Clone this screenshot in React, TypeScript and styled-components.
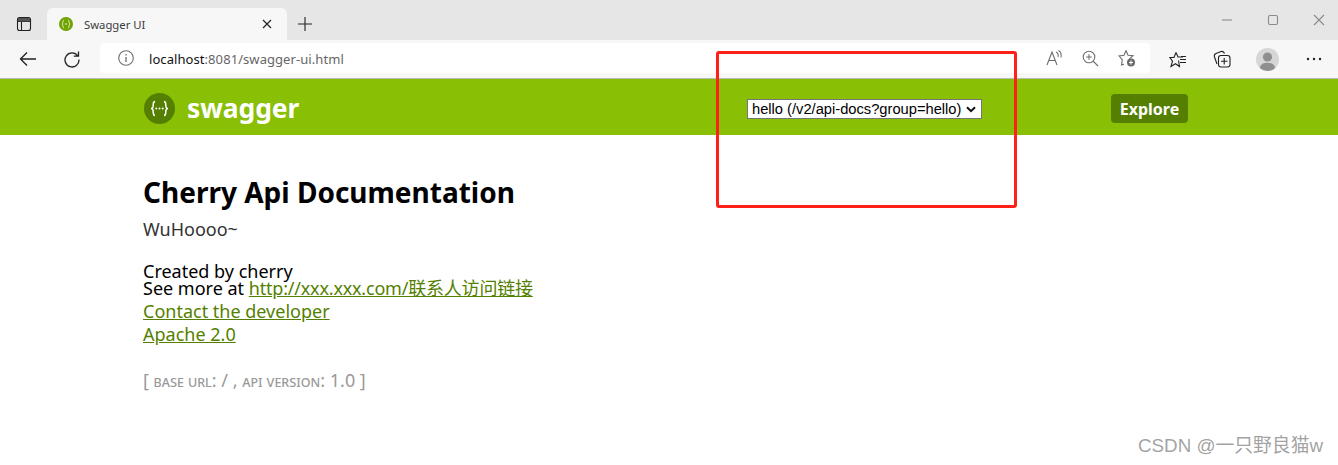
import React from "react";
import styled, { createGlobalStyle } from "styled-components";

const UI_FONT = `"Noto Sans", "Noto Sans CJK SC", sans-serif`;

const CHEVRON = encodeURIComponent(
  `<svg xmlns="http://www.w3.org/2000/svg" width="10" height="7" viewBox="0 0 10 7"><path d="M1 1.200L5 5.200L9 1.200" fill="none" stroke="#111" stroke-width="2"/></svg>`
);

const Global = createGlobalStyle`
  html, body { margin: 0; padding: 0; background: #fff; }
  body { width: 1338px; height: 465px; overflow: hidden; font-family: ${UI_FONT}; position: relative; }
`;

const Page = styled.div`
  width: 1338px;
  height: 465px;
  position: relative;
  overflow: hidden;
  display: flex;
  flex-direction: column;
`;

const TabStrip = styled.div`
  height: 40px;
  flex: none;
  background: #e6e6e6;
  display: flex;
  align-items: flex-end;
  box-sizing: border-box;
`;

const TabActions = styled.div`
  width: 47px;
  height: 32px;
  display: flex;
  align-items: center;
  justify-content: center;
  flex: none;
`;

const Tab = styled.div`
  width: 240px;
  height: 32px;
  flex: none;
  background: #f7f7f7;
  border-radius: 6px 6px 0 0;
  display: flex;
  align-items: center;
  box-sizing: border-box;
  padding: 0 15px 0 12px;
`;

const TabTitle = styled.span`
  font-size: 11.3px;
  color: #3c3c3c;
  margin-left: 11px;
  flex: 1;
`;

const NewTab = styled.div`
  width: 36px;
  height: 32px;
  display: flex;
  align-items: center;
  justify-content: center;
  flex: none;
`;

const Spacer = styled.div`
  flex: 1;
`;

const WindowControls = styled.div`
  display: flex;
  align-items: center;
  height: 40px;
  padding-right: 7px;
  gap: 21px;
`;

const WindowButton = styled.div`
  width: 25px;
  height: 40px;
  display: flex;
  align-items: center;
  justify-content: center;
`;

const Toolbar = styled.div`
  height: 39px;
  flex: none;
  background: #f7f7f7;
  border-bottom: 1px solid #b9b9b9;
  box-sizing: border-box;
  display: flex;
  align-items: center;
`;

const NavButton = styled.div`
  width: 44px;
  height: 38px;
  display: flex;
  align-items: center;
  justify-content: center;
  flex: none;
`;

const NavGroup = styled.div`
  display: flex;
  padding-left: 6px;
  width: 100px;
  box-sizing: border-box;
  flex: none;
`;

const AddressBar = styled.div`
  width: 1050px;
  height: 30px;
  margin-top: -3px;
  background: #fff;
  border-radius: 4px;
  display: flex;
  align-items: center;
  box-sizing: border-box;
  padding: 0 14px 0 18px;
  flex: none;
`;

const Url = styled.span`
  font-size: 13px;
  margin-left: 15px;
  padding-top: 2px;
  color: #666;
  flex: 1;
  letter-spacing: 0.07px;
`;

const Host = styled.span`
  color: #111;
`;

const AddressIcons = styled.div`
  display: flex;
  gap: 19px;
  align-items: center;
  padding-top: 1px;
`;

const ToolIcons = styled.div`
  display: flex;
  align-items: center;
  padding-left: 16px;
  gap: 21px;
`;

const Avatar = styled.div`
  width: 23px;
  height: 23px;
  display: flex;
  margin-left: 4px;
`;

const SwaggerBar = styled.header`
  height: 56px;
  flex: none;
  background: #89bf04;
  display: flex;
  align-items: center;
  box-sizing: border-box;
  padding: 3px 150px 0 143px;
`;

const Logo = styled.div`
  display: flex;
  align-items: center;
  gap: 11px;
  width: 604px;
  flex: none;
`;

const LogoText = styled.span`
  color: #fff;
  font-size: 26.5px;
  font-weight: 700;
  letter-spacing: -0.1px;
  line-height: 30px;
  padding-bottom: 2px;
`;

const GroupSelect = styled.select`
  width: 235px;
  height: 20px;
  margin: 0;
  font: 14.7px "Liberation Sans", Arial, sans-serif;
  color: #000;
  appearance: none;
  background: #fff url("data:image/svg+xml,${CHEVRON}") no-repeat 218px 6px;
  border: 1px solid #767676;
  border-radius: 0;
  padding: 0 0 0 4px;
`;

const Explore = styled.button`
  margin-left: auto;
  width: 77px;
  height: 29px;
  border: 0;
  border-radius: 4px;
  background: #547f00;
  color: #fff;
  font: 700 16px ${UI_FONT};
  padding: 0;
`;

const Content = styled.main`
  padding: 37px 0 0 143px;
  flex: 1;
  color: #000;
  font-size: 18px;
`;

const Title = styled.h1`
  margin: 0;
  font-size: 28px;
  font-weight: 700;
  line-height: 40px;
  color: #000;
`;

const Description = styled.p`
  margin: 6px 0 0;
  line-height: 23px;
  color: #333;
`;

const Contact = styled.div`
  margin-top: 22px;
  line-height: 17px;
`;

const InfoLink = styled.a<{ $block?: boolean; $tight?: boolean }>`
  color: #547f00;
  text-decoration: underline;
  display: ${(p) => (p.$block ? "block" : "inline")};
  line-height: ${(p) => (p.$block ? "23px" : "inherit")};
  letter-spacing: ${(p) => (p.$tight ? "-0.2px" : "0")};
`;

const Links = styled.div`
  margin-top: 3px;
`;

const BaseInfo = styled.div`
  margin-top: 22px;
  color: #999;
  line-height: 24px;
`;

const Small = styled.span`
  font-variant: small-caps;
  font-size: 15.5px;
`;

const Highlight = styled.div`
  position: absolute;
  left: 716px;
  top: 51px;
  width: 301px;
  height: 157px;
  box-sizing: border-box;
  border: 3px solid #ff2018;
  border-radius: 3px;
`;

const Watermark = styled.div`
  position: absolute;
  right: 15px;
  top: 434px;
  font-size: 18.8px;
  line-height: 24px;
  color: rgba(120, 120, 120, 0.7);
  white-space: nowrap;
  font-family: "Liberation Sans", "Noto Sans CJK SC", sans-serif;
`;

const stroke = { fill: "none", stroke: "#222", strokeWidth: 1.1 } as const;
const gray = { fill: "none", stroke: "#6e6e6e", strokeWidth: 1.1 } as const;

export default function App() {
  return (
    <Page>
      <Global />
      <TabStrip>
        <TabActions>
          <svg width="16" height="16" viewBox="0 0 16 16" {...stroke}>
            <rect x="1.5" y="1.5" width="13" height="13" rx="2" />
            <path d="M1.5 5.5H14.5M5.5 5.5V14.5" />
            <path d="M2 2h12v3.5H2z" fill="#555" stroke="none" />
          </svg>
        </TabActions>
        <Tab>
          <svg width="14" height="14" viewBox="0 0 14 14" style={{ marginLeft: 0 }}>
            <circle cx="7" cy="7" r="7" fill="#6fa300" />
            <path d="M5.200 2.800C3.200 3.200 4.600 6.300 3 7C4.600 7.700 3.200 10.800 5.200 11.200M8.800 2.800C10.800 3.200 9.400 6.300 11 7C9.400 7.700 10.800 10.800 8.800 11.200M5.800 7H8.200" fill="none" stroke="#dfe9c0" strokeWidth="1" />
          </svg>
          <TabTitle>Swagger UI</TabTitle>
          <svg width="10" height="10" viewBox="0 0 10 10" {...stroke} strokeWidth="1.2">
            <path d="M1 1L9 9M9 1L1 9" />
          </svg>
        </Tab>
        <NewTab>
          <svg width="16" height="16" viewBox="0 0 16 16" {...stroke}>
            <path d="M8 1V15M1 8H15" />
          </svg>
        </NewTab>
        <Spacer />
        <WindowControls>
          <WindowButton>
            <svg width="12" height="12" viewBox="0 0 12 12" {...gray} stroke="#8a8a8a"><path d="M1 6H11" /></svg>
          </WindowButton>
          <WindowButton>
            <svg width="12" height="12" viewBox="0 0 12 12" {...gray} stroke="#8a8a8a"><rect x="1.500" y="1.500" width="9" height="9" rx="1.500" /></svg>
          </WindowButton>
          <WindowButton>
            <svg width="12" height="12" viewBox="0 0 12 12" {...gray} stroke="#8a8a8a"><path d="M1 1L11 11M11 1L1 11" /></svg>
          </WindowButton>
        </WindowControls>
      </TabStrip>
      <Toolbar>
        <NavGroup>
          <NavButton>
            <svg width="18" height="16" viewBox="0 0 18 16" {...stroke} strokeWidth="1.3">
              <path d="M17 8H1.500M8 1.500L1.500 8L8 14.500" />
            </svg>
          </NavButton>
          <NavButton>
            <svg width="18" height="18" viewBox="0 0 18 18" {...stroke} strokeWidth="1.3">
              <path d="M14.800 6A7 7 0 1 0 16 9.500M15.500 1.500V6.200H10.800" />
            </svg>
          </NavButton>
        </NavGroup>
        <AddressBar>
          <svg width="16" height="16" viewBox="0 0 16 16" {...gray}>
            <circle cx="8" cy="8" r="7.300" />
            <path d="M8 7V12M8 4V5.500" strokeWidth="1.300" />
          </svg>
          <Url>
            <Host>localhost</Host>:8081/swagger-ui.html
          </Url>
          <AddressIcons>
            <svg width="17" height="17" viewBox="0 0 17 17" {...gray}>
              <path d="M1 15L6 2L11 15M2.800 10.500H9.200M10 2C12 3 12.500 5 12 7M12.500 .5C15 2 15.500 5 15 7.500" />
            </svg>
            <svg width="17" height="17" viewBox="0 0 17 17" {...gray}>
              <circle cx="7" cy="7" r="5.800" />
              <path d="M7 4.200V9.800M4.200 7H9.800M11 11L16 16" />
            </svg>
            <svg width="18" height="18" viewBox="0 0 18 18" {...gray}>
              <path d="M8 1.500L10 6.200L15 6.700L11.500 9.800M6 15.200L3.500 16L4.300 10.800L1 6.900L6 6.200L8 1.500" />
              <circle cx="13" cy="13.500" r="4" fill="#6a6a6a" stroke="none" />
              <path d="M13 11.500V15.500M11 13.500H15" stroke="#fff" />
            </svg>
          </AddressIcons>
        </AddressBar>
        <ToolIcons>
          <svg width="18" height="17" viewBox="0 0 18 17" {...stroke} style={{ marginLeft: 3 }}>
            <path d="M7 1.500L9 6H14M9.500 9.500L10.500 15.500L6.500 12.700L2 15.500L3.500 10.200L.8 6.500H5L7 1.500M11 8.500H17M11 11.500H17M12 5.500H17" />
          </svg>
          <svg width="18" height="18" viewBox="0 0 18 18" {...stroke} style={{ marginLeft: 5 }}>
            <path d="M4 14L1.500 7C1 5 1.500 4 3 3.500L8 1.500C10 1 11 2 11.500 3.500" />
            <rect x="5.500" y="5.500" width="11.500" height="11.500" rx="2.500" />
            <path d="M11.200 8V14.500M8 11.200H14.500" />
          </svg>
          <Avatar>
            <svg width="23" height="23" viewBox="0 0 23 23">
              <circle cx="11.500" cy="11.500" r="11.500" fill="#d6d6d6" />
              <circle cx="11.500" cy="9" r="4.600" fill="#8f8f8f" />
              <path d="M3.800 20C4.500 16 8 14.800 11.500 14.800S18.500 16 19.200 20A11.500 11.500 0 0 1 3.800 20Z" fill="#8f8f8f" />
            </svg>
          </Avatar>
          <svg width="16" height="4" viewBox="0 0 16 4" fill="#222" style={{ marginLeft: 6 }}>
            <circle cx="2" cy="2" r="1.200" />
            <circle cx="8" cy="2" r="1.200" />
            <circle cx="14" cy="2" r="1.200" />
          </svg>
        </ToolIcons>
      </Toolbar>
      <SwaggerBar>
        <Logo>
          <svg width="33" height="33" viewBox="0 0 33 33">
            <circle cx="16.500" cy="16.500" r="15.500" fill="#547f00" />
            <path d="M12 9.500C9.500 9.500 10.500 13 10 15C9.700 16 9 16.500 8 16.500C9 16.500 9.700 17 10 18C10.500 20 9.500 23.500 12 23.500M21 9.500C23.500 9.500 22.500 13 23 15C23.300 16 24 16.500 25 16.500C24 16.500 23.300 17 23 18C22.500 20 23.500 23.500 21 23.500" fill="none" stroke="#fff" strokeWidth="1.500" />
            <circle cx="13.300" cy="16.500" r="1" fill="#fff" />
            <circle cx="16.500" cy="16.500" r="1" fill="#fff" />
            <circle cx="19.700" cy="16.500" r="1" fill="#fff" />
          </svg>
          <LogoText>swagger</LogoText>
        </Logo>
        <GroupSelect defaultValue="hello">
          <option value="hello">hello (/v2/api-docs?group=hello)</option>
        </GroupSelect>
        <Explore>Explore</Explore>
      </SwaggerBar>
      <Content>
        <Title>Cherry Api Documentation</Title>
        <Description>WuHoooo~</Description>
        <Contact>
          Created by cherry
          <div>
            See more at <InfoLink $tight href="#">http://xxx.xxx.com/联系人访问链接</InfoLink>
          </div>
        </Contact>
        <Links>
          <InfoLink $block href="#">Contact the developer</InfoLink>
          <InfoLink $block href="#">Apache 2.0</InfoLink>
        </Links>
        <BaseInfo>
          [ <Small>base url</Small>: / , <Small>api version</Small>: 1.0 ]
        </BaseInfo>
      </Content>
      <Highlight />
      <Watermark>CSDN @一只野良猫w</Watermark>
    </Page>
  );
}
